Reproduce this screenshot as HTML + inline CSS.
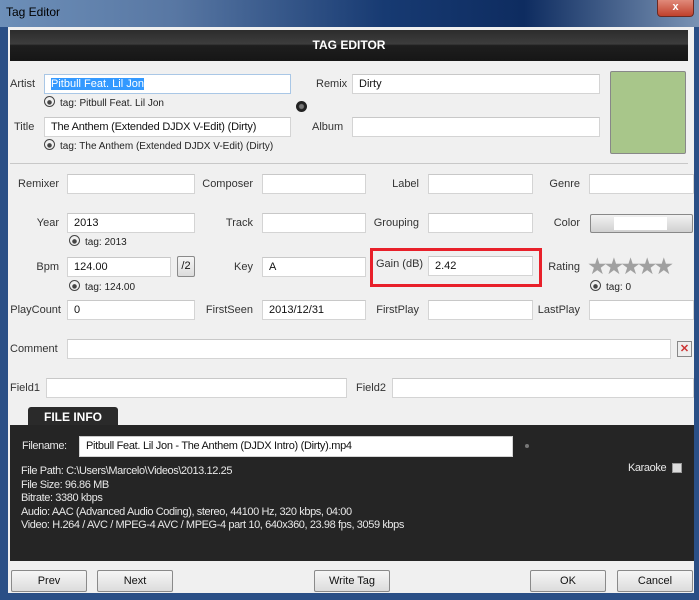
<!DOCTYPE html>
<html><head><style>
*{margin:0;padding:0;box-sizing:border-box}
body{width:699px;height:600px;overflow:hidden;position:relative;background:#2a4f86;font-family:"Liberation Sans",sans-serif;font-size:11px;color:#222}
.a{position:absolute}
.tb{left:0;top:0;width:699px;height:27px;background:linear-gradient(90deg,#6d8fb8 0%,#5877a3 25%,#173a72 55%,#0e2c60 75%,#7a93b4 100%)}
.in{background:#fff;border:1px solid #d4d4d4;border-top-color:#c8c8c8;height:20px;padding-left:6px;line-height:18px;font-size:11px;color:#111}
.lb{font-size:11px;color:#333;text-align:right;white-space:nowrap}
.tag{font-size:10px;color:#222}
.tag:before{content:"";display:inline-block;width:9px;height:9px;border:1px solid #444;border-radius:50%;margin-right:5px;vertical-align:-1px;background:radial-gradient(circle at 50% 60%,#444 0 2px,transparent 2.5px)}
.btn{background:linear-gradient(#f6f6f6,#dcdcdc);border:1px solid #8a8a8a;border-radius:2px;text-align:center;font-size:11px;line-height:20px;height:22px;color:#111}
.fi{color:#e8e8e8;font-size:11px;letter-spacing:-0.4px;line-height:13.6px}
</style></head><body>
<div class="a tb"></div>
<div class="a" style="left:6px;top:5px;font-size:12px;color:#000">Tag Editor</div>
<div class="a" style="left:657px;top:0;width:37px;height:17px;background:linear-gradient(#e08a7a,#c0412c);border:1px solid #6b2a22;border-top:none;border-radius:0 0 4px 4px;color:#fff;font-weight:bold;text-align:center;line-height:15px;font-size:11px">x</div>
<div class="a" style="left:8px;top:27px;width:686px;height:566px;background:#f0f0f0"></div>
<div class="a" style="left:10px;top:30px;width:678px;height:31px;background:linear-gradient(#2c2c2c 0%,#3d3d3d 45%,#1e1e1e 50%,#161616 100%);color:#fff;font-weight:bold;font-size:12px;text-align:center;line-height:30px">TAG EDITOR</div>

<div class="a lb" style="left:10px;top:78px">Artist</div>
<div class="a in" style="left:44px;top:74px;width:247px;border-color:#a9c7e6"><span style="background:#3399ff;color:#fff">Pitbull Feat. Lil Jon</span></div>
<div class="a tag" style="left:44px;top:96px">tag: Pitbull Feat. Lil Jon</div>
<div class="a" style="left:296px;top:101px;width:11px;height:11px;border-radius:50%;background:radial-gradient(circle,#777 0 2px,#222 3px)"></div>
<div class="a lb" style="left:316px;top:78px">Remix</div>
<div class="a in" style="left:352px;top:74px;width:248px">Dirty</div>
<div class="a" style="left:610px;top:71px;width:76px;height:83px;background:#a8c68a;border:1px solid #888;border-radius:2px"></div>
<div class="a lb" style="left:14px;top:121px">Title</div>
<div class="a in" style="left:44px;top:117px;width:247px;letter-spacing:-0.2px">The Anthem (Extended DJDX V-Edit) (Dirty)</div>
<div class="a tag" style="left:44px;top:139px">tag: The Anthem (Extended DJDX V-Edit) (Dirty)</div>
<div class="a lb" style="left:312px;top:121px">Album</div>
<div class="a in" style="left:352px;top:117px;width:248px"></div>
<div class="a" style="left:10px;top:163px;width:678px;height:1px;background:#c8c8c8"></div>

<div class="a lb" style="left:0;width:59px;top:178px">Remixer</div>
<div class="a in" style="left:67px;top:174px;width:128px"></div>
<div class="a lb" style="left:190px;width:63px;top:178px">Composer</div>
<div class="a in" style="left:262px;top:174px;width:104px"></div>
<div class="a lb" style="left:370px;width:49px;top:178px">Label</div>
<div class="a in" style="left:428px;top:174px;width:105px"></div>
<div class="a lb" style="left:540px;width:40px;top:178px">Genre</div>
<div class="a in" style="left:589px;top:174px;width:105px"></div>

<div class="a lb" style="left:0;width:59px;top:217px">Year</div>
<div class="a in" style="left:67px;top:213px;width:128px">2013</div>
<div class="a tag" style="left:69px;top:235px">tag: 2013</div>
<div class="a lb" style="left:190px;width:63px;top:217px">Track</div>
<div class="a in" style="left:262px;top:213px;width:104px"></div>
<div class="a lb" style="left:360px;width:59px;top:217px">Grouping</div>
<div class="a in" style="left:428px;top:213px;width:105px"></div>
<div class="a lb" style="left:540px;width:40px;top:217px">Color</div>
<div class="a" style="left:590px;top:214px;width:103px;height:19px;background:linear-gradient(#f2f2f2,#d0d0d0);border:1px solid #888;border-radius:2px"></div>
<div class="a" style="left:614px;top:217px;width:53px;height:13px;background:#fff"></div>

<div class="a lb" style="left:0;width:59px;top:261px">Bpm</div>
<div class="a in" style="left:67px;top:257px;width:104px">124.00</div>
<div class="a btn" style="left:177px;top:256px;width:18px;height:21px;line-height:19px">/2</div>
<div class="a tag" style="left:69px;top:280px">tag: 124.00</div>
<div class="a lb" style="left:190px;width:63px;top:261px">Key</div>
<div class="a in" style="left:262px;top:257px;width:104px">A</div>
<div class="a" style="left:370px;top:248px;width:172px;height:39px;border:3px solid #e8202a"></div>
<div class="a lb" style="left:376px;top:258px">Gain (dB)</div>
<div class="a in" style="left:428px;top:256px;width:105px">2.42</div>
<div class="a lb" style="left:540px;width:40px;top:261px">Rating</div>
<div class="a" style="left:587px;top:252px;font-size:23px;line-height:28px;color:#a0a0a0;letter-spacing:-4px">★★★★★</div>
<div class="a tag" style="left:590px;top:280px">tag: 0</div>

<div class="a lb" style="left:0;width:61px;top:304px">PlayCount</div>
<div class="a in" style="left:67px;top:300px;width:128px">0</div>
<div class="a lb" style="left:190px;width:63px;top:304px">FirstSeen</div>
<div class="a in" style="left:262px;top:300px;width:104px">2013/12/31</div>
<div class="a lb" style="left:360px;width:59px;top:304px">FirstPlay</div>
<div class="a in" style="left:428px;top:300px;width:105px"></div>
<div class="a lb" style="left:530px;width:50px;top:304px">LastPlay</div>
<div class="a in" style="left:589px;top:300px;width:105px"></div>

<div class="a lb" style="left:10px;top:343px">Comment</div>
<div class="a in" style="left:67px;top:339px;width:604px"></div>
<div class="a" style="left:677px;top:341px;width:15px;height:16px;border:1px solid #888;background:#eee;color:#c33;font-weight:bold;font-size:11px;text-align:center;line-height:14px">✕</div>
<div class="a lb" style="left:10px;top:382px">Field1</div>
<div class="a in" style="left:46px;top:378px;width:301px"></div>
<div class="a lb" style="left:356px;top:382px">Field2</div>
<div class="a in" style="left:392px;top:378px;width:302px"></div>

<div class="a" style="left:28px;top:407px;width:90px;height:20px;background:#2a2a2a;border-radius:3px 3px 0 0;color:#fff;font-weight:bold;font-size:12px;text-align:center;line-height:20px">FILE INFO</div>
<div class="a" style="left:10px;top:425px;width:684px;height:136px;background:#252525"></div>
<div class="a fi" style="left:22px;top:440px">Filename:</div>
<div class="a in" style="left:79px;top:436px;width:434px;height:21px;line-height:19px;letter-spacing:-0.3px">Pitbull Feat. Lil Jon - The Anthem (DJDX Intro) (Dirty).mp4</div>
<div class="a" style="left:525px;top:444px;width:4px;height:4px;border-radius:50%;background:#777"></div>
<div class="a fi" style="left:21px;top:465px">File Path: C:\Users\Marcelo\Videos\2013.12.25<br>File Size: 96.86 MB<br>Bitrate: 3380 kbps<br>Audio: AAC (Advanced Audio Coding), stereo, 44100 Hz, 320 kbps, 04:00<br>Video: H.264 / AVC / MPEG-4 AVC / MPEG-4 part 10, 640x360, 23.98 fps, 3059 kbps</div>
<div class="a fi" style="left:628px;top:462px">Karaoke</div>
<div class="a" style="left:672px;top:463px;width:10px;height:10px;background:#ddd;border:1px solid #999"></div>

<div class="a btn" style="left:11px;top:570px;width:76px">Prev</div>
<div class="a btn" style="left:97px;top:570px;width:76px">Next</div>
<div class="a btn" style="left:314px;top:570px;width:76px">Write Tag</div>
<div class="a btn" style="left:530px;top:570px;width:76px">OK</div>
<div class="a btn" style="left:617px;top:570px;width:76px">Cancel</div>
</body></html>
